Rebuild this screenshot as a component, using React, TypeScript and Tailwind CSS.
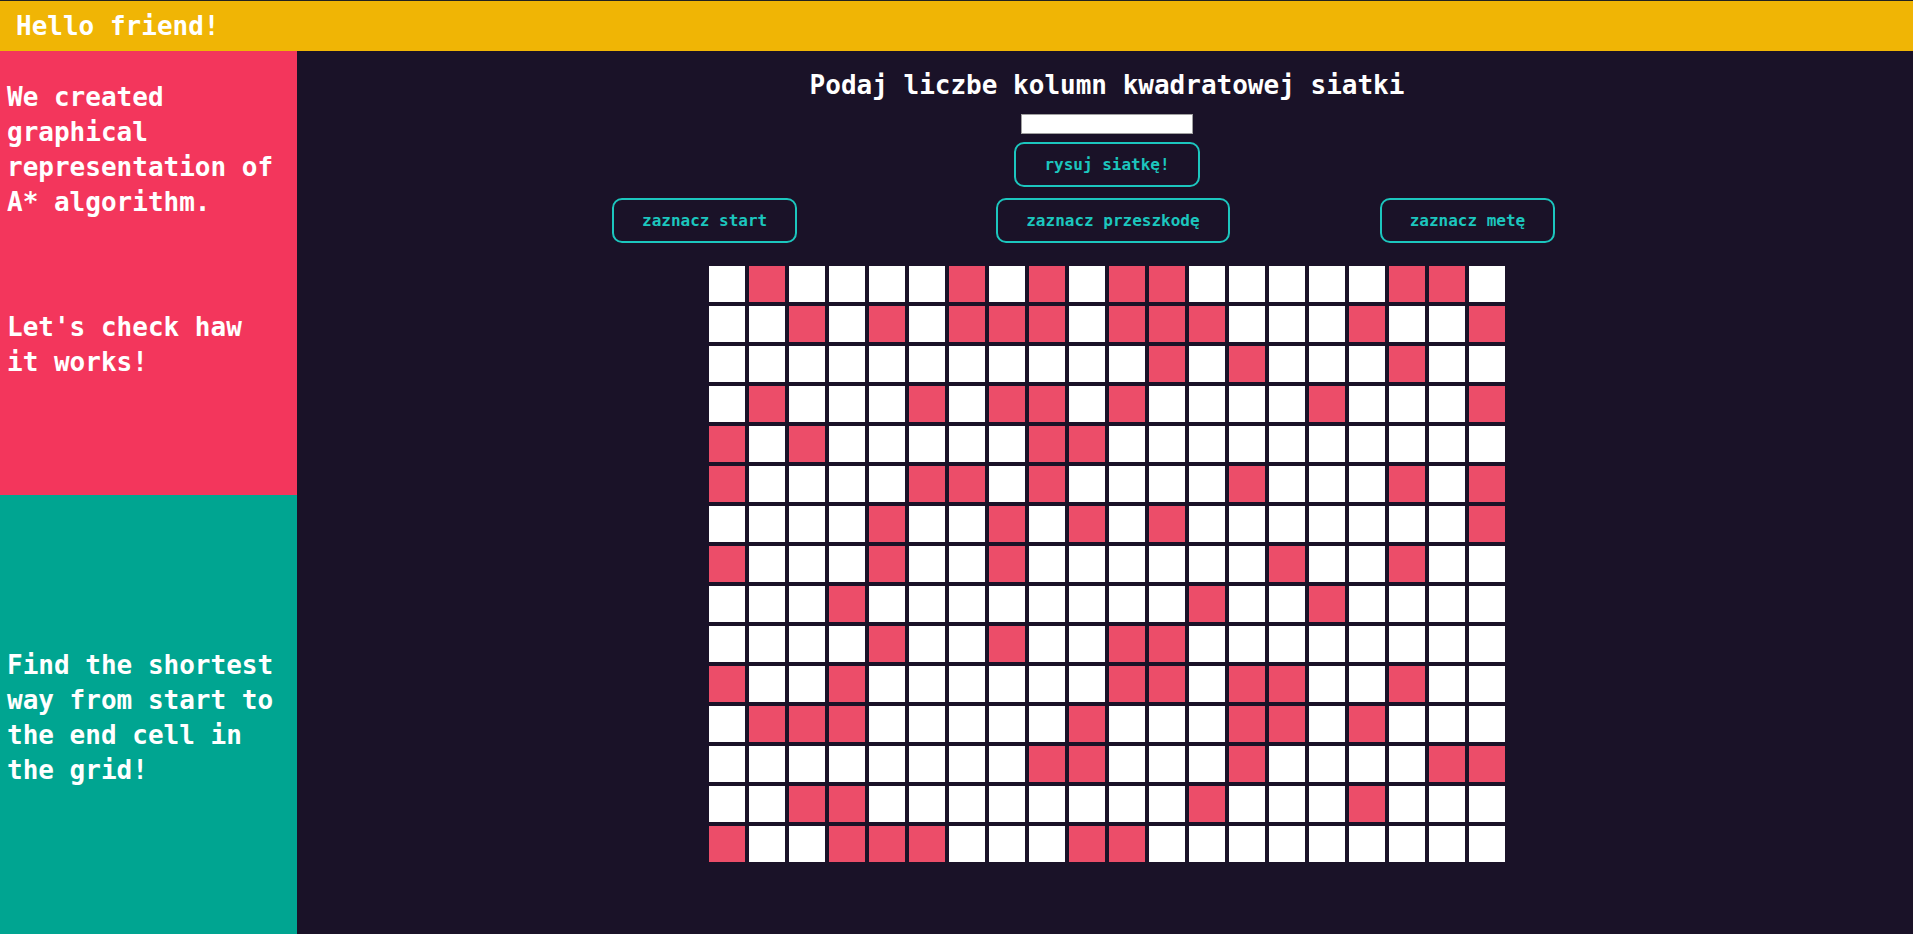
import React from 'react';

const FONT = "font-['DejaVu_Sans_Mono',monospace]";

// 1 = przeszkoda (czerwona), 0 = wolna komórka
const GRID = [
  '01000010101100000110',
  '00101011101110001001',
  '00000000000101000100',
  '01000101101000010001',
  '10100000110000000000',
  '10000110100001000101',
  '00001001010100000001',
  '10001001000000100100',
  '00010000000010010000',
  '00001001001100000000',
  '10010000001101100100',
  '01110000010001101000',
  '00000000110001000011',
  '00110000000010001000',
  '10011100011000000000',
];

const ActionButton: React.FC<{ label: string; className?: string }> = ({ label, className = '' }) => (
  <button
    className={`h-[45px] px-[28px] flex items-center justify-center border-2 border-[#1cc6be] rounded-[10px] text-[#1cc6be] text-[16px] font-bold whitespace-nowrap ${className}`}
  >
    {label}
  </button>
);

export default function App() {
  return (
    <div className={`h-screen w-full flex flex-col border-t border-[#222] ${FONT} text-white overflow-hidden`}>
      <header className="h-[50px] shrink-0 bg-[#f0b505] flex items-center pl-4">
        <h1 className="text-[26px] font-bold leading-none">Hello friend!</h1>
      </header>

      <div className="flex flex-1 min-h-0">
        <aside className="w-[297px] shrink-0 flex flex-col">
          <div className="h-[444px] bg-[#f3365c] pl-[7px] pr-[14px] pt-[29px] text-[26px] font-bold leading-[35px]">
            <p>We created graphical representation of A* algorithm.</p>
            <p className="mt-[90px]">Let's check haw it works!</p>
          </div>
          <div className="flex-1 bg-[#00a591] pl-[7px] pr-[14px] pt-[153px] text-[26px] font-bold leading-[35px]">
            <p>Find the shortest way from start to the end cell in the grid!</p>
          </div>
        </aside>

        <main className="flex-1 bg-[#1a1228] flex flex-col items-center pl-[4px] pt-[17px]">
          <h2 className="text-[26px] font-bold leading-[35px]">Podaj liczbe kolumn kwadratowej siatki</h2>
          <input
            type="number"
            className="mt-[11px] w-[172px] h-[20px] bg-white border border-[#a0a0a0] text-black outline-none"
          />
          <ActionButton label="rysuj siatkę!" className="mt-[8px]" />

          <div className="w-full flex mt-[11px]">
            <ActionButton label="zaznacz start" className="ml-[311px]" />
            <ActionButton label="zaznacz przeszkodę" className="ml-[199px]" />
            <ActionButton label="zaznacz metę" className="ml-[150px]" />
          </div>

          <div className="mt-[23px] grid grid-cols-[repeat(20,36px)] gap-[4px]">
            {GRID.map((row, r) =>
              row.split('').map((c, i) => (
                <div
                  key={`${r}-${i}`}
                  className={`w-[36px] h-[36px] ${c === '1' ? 'bg-[#ec4d69]' : 'bg-white'}`}
                />
              ))
            )}
          </div>
        </main>
      </div>
    </div>
  );
}
